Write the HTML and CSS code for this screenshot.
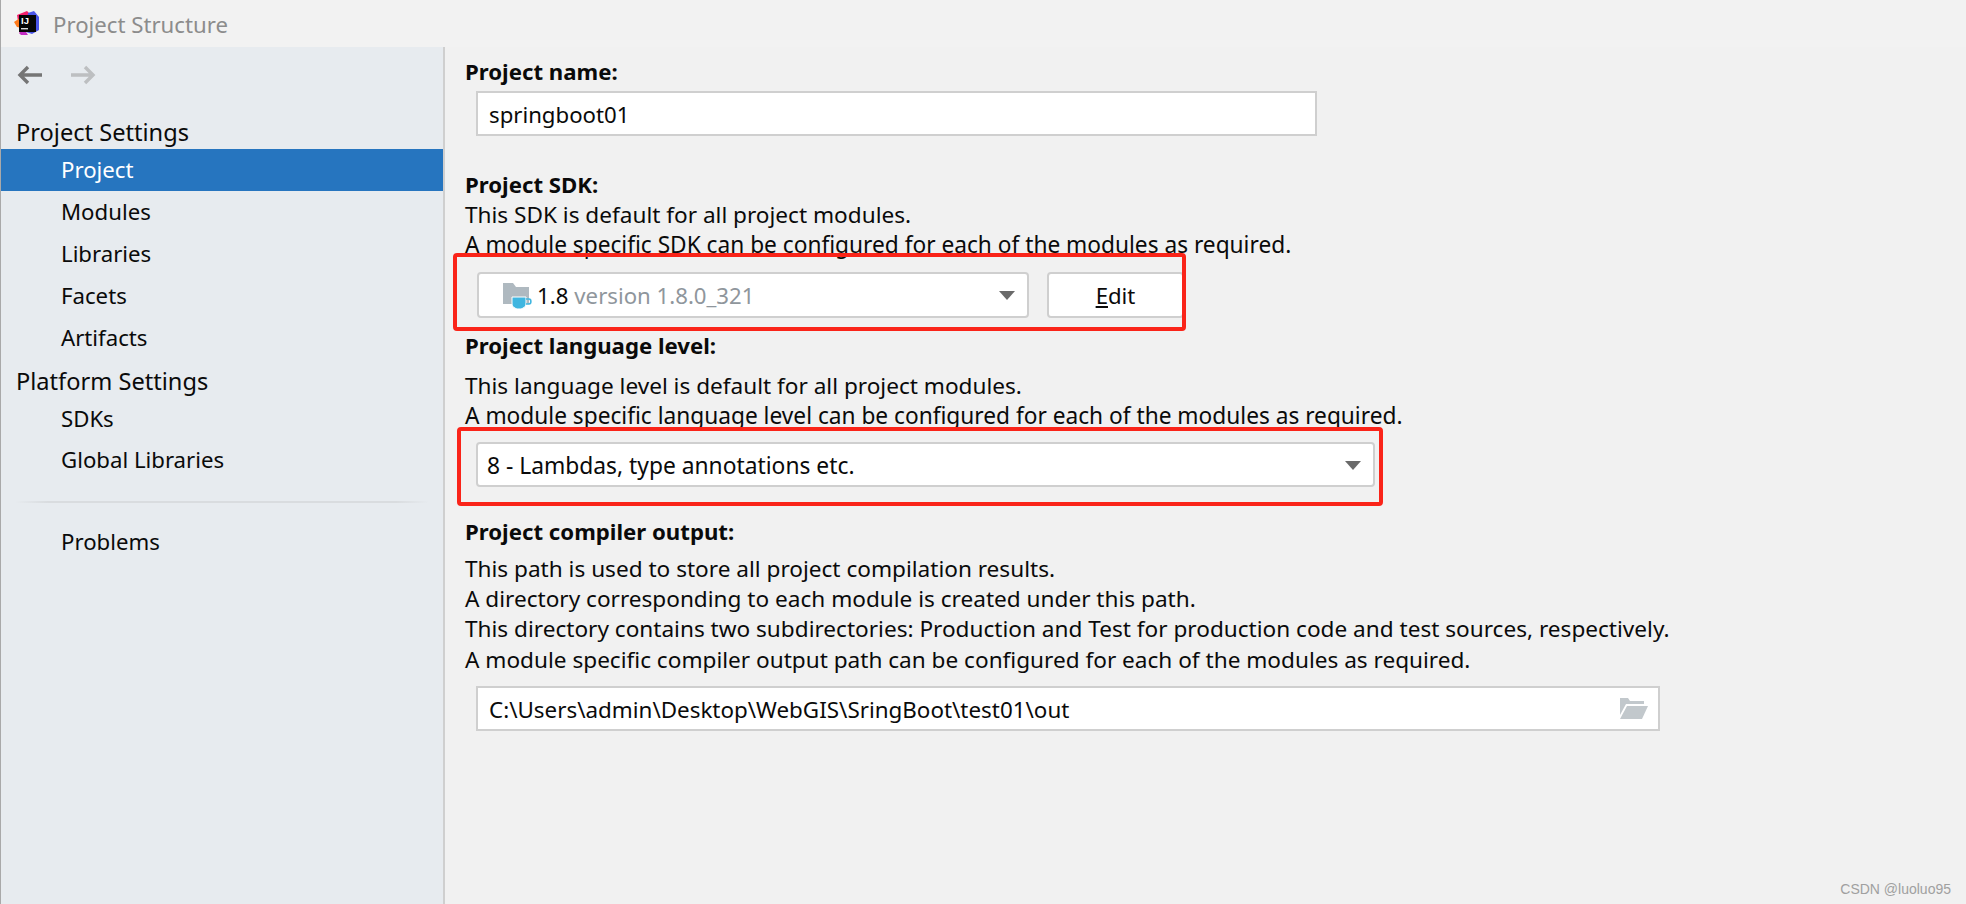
FILE: index.html
```html
<!DOCTYPE html>
<html lang="en">
<head>
<meta charset="utf-8">
<title>Project Structure</title>
<link rel="stylesheet" href="styles.css">
</head>
<body>
<header class="titlebar">
  <svg class="app-logo" width="26" height="26" viewBox="0 0 26 26">
    <path d="M3 5 L13 1 L17 5 L13 20 L6 24 Z" fill="#f5206b"/>
    <path d="M0 12 L6 8 L9 18 L3 17 Z" fill="#ff7a1a"/>
    <path d="M14 3 L20 1 L25 7 L25 20 L18 24 L12 22 Z" fill="#4a55e8"/>
    <path d="M5 23 L10 19 L14 25 L7 25 Z" fill="#c22cc2"/>
    <rect x="5" y="5" width="17" height="17" fill="#050505"/>
    <rect x="7" y="18" width="7" height="1.4" fill="#dddddd"/>
    <text class="app-logo-text" x="7" y="14">IJ</text>
  </svg>
  <span class="title-text">Project Structure</span>
</header>
<div class="main">
  <aside class="sidebar">
    <div class="nav-arrows">
      <svg width="26" height="20" viewBox="0 0 26 20"><path d="M25 10 H3 M11 2 L3 10 L11 18" fill="none" stroke="#757575" stroke-width="3.4"/></svg>
      <svg width="26" height="20" viewBox="0 0 26 20"><path d="M1 10 H23 M15 2 L23 10 L15 18" fill="none" stroke="#bdbfc1" stroke-width="3.4"/></svg>
    </div>
    <div class="group first">Project Settings</div>
    <div class="item selected">Project</div>
    <div class="item">Modules</div>
    <div class="item">Libraries</div>
    <div class="item">Facets</div>
    <div class="item">Artifacts</div>
    <div class="group">Platform Settings</div>
    <div class="item tight">SDKs</div>
    <div class="item">Global Libraries</div>
    <div class="divider"></div>
    <div class="item">Problems</div>
  </aside>
  <main class="content">
    <div class="label">Project name:</div>
    <div class="field name-field">springboot01</div>

    <div class="label sdk-label">Project SDK:</div>
    <div class="line">This SDK is default for all project modules.</div>
    <div class="line wide">A module specific SDK can be configured for each of the modules as required.</div>
    <div class="sdk-row">
      <div class="combo sdk-combo">
        <svg class="sdk-icon" width="30" height="30" viewBox="0 0 30 30">
          <path d="M1 3 H11 L14 7 H27 V24 H1 Z" fill="#afb9c0"/>
          <path d="M10 17 H24 V23 C24 27 21 29 17 29 C13 29 10 27 10 23 Z" fill="#40b6e0" stroke="#fff" stroke-width="1"/>
          <path d="M24 19 H27 C29.5 19 29.5 24 27 24 H24" fill="none" stroke="#40b6e0" stroke-width="1.6"/>
        </svg>
        <span class="combo-text">1.8</span><span class="combo-text muted">version 1.8.0_321</span>
        <span class="caret"></span>
      </div>
      <div class="button"><span class="mnemonic">E</span>dit</div>
    </div>

    <div class="label lang-label">Project language level:</div>
    <div class="line lang-first">This language level is default for all project modules.</div>
    <div class="line wide">A module specific language level can be configured for each of the modules as required.</div>
    <div class="combo lang-combo">
      <span class="combo-text lang-value">8 - Lambdas, type annotations etc.</span>
      <span class="caret"></span>
    </div>

    <div class="label out-label">Project compiler output:</div>
    <div class="line out-first">This path is used to store all project compilation results.</div>
    <div class="line">A directory corresponding to each module is created under this path.</div>
    <div class="line">This directory contains two subdirectories: Production and Test for production code and test sources, respectively.</div>
    <div class="line out-last">A module specific compiler output path can be configured for each of the modules as required.</div>
    <div class="field out-field">
      <span class="path-text">C:\Users\admin\Desktop\WebGIS\SringBoot\test01\out</span>
      <svg width="28" height="21" viewBox="0 0 28 21"><path d="M0 0 H8 L10 3 H24 V6 H6 L0 17 Z" fill="#c2c8cc"/><path d="M7 8 H28 L22 21 H0 Z" fill="#c2c8cc"/></svg>
    </div>
  </main>
</div>
<div class="mark mark-sdk"></div>
<div class="mark mark-lang"></div>
<div class="watermark">CSDN @luoluo95</div>
</body>
</html>
```

FILE: styles.css
```css
* { box-sizing: border-box; }
html, body { margin: 0; height: 100%; }
body {
  width: 1966px;
  height: 904px;
  overflow: hidden;
  position: relative;
  display: flex;
  flex-direction: column;
  background: #f1f1f1;
  color: #0a0a0a;
  font-family: "Noto Sans", "Open Sans", sans-serif;
  font-size: 22.2px;
  line-height: 30px;
  border-left: 1px solid #a9a9a9;
}
.titlebar {
  height: 47px;
  flex: none;
  display: flex;
  align-items: center;
  padding-left: 13px;
  background: #f2f2f2;
}
.app-logo { margin-top: -2px; flex: none; }
.app-logo-text { font-family: "Liberation Sans", sans-serif; font-size: 9.5px; font-weight: 700; fill: #fff; }
.title-text { margin-left: 13px; padding-top: 2px; color: #8c8c8c; font-size: 22.2px; }
.main { flex: 1; display: flex; min-height: 0; }
.sidebar {
  width: 444px;
  flex: none;
  background: #e7ebef;
  border-right: 2px solid #cfcfcf;
}
.nav-arrows {
  display: flex;
  gap: 27px;
  padding: 18px 0 0 16px;
  height: 64px;
}
.group { height: 42px; line-height: 44px; padding-left: 15px; font-size: 23.6px; }
.group.first { height: 38px; line-height: 42px; }
.item { height: 42px; line-height: 42px; padding-left: 60px; }
.item.tight { height: 38px; line-height: 36px; }
.item.selected { background: #2675bf; color: #fff; }
.divider {
  height: 2px;
  margin: 20px 14px 18px;
  background: linear-gradient(90deg, #e7ebef, #d9dcdf 8%, #d9dcdf 92%, #e7ebef);
}
.content { flex: 1; padding: 10px 0 0 20px; min-width: 0; }
.label { font-weight: 700; }
.line { height: 30px; line-height: 32px; white-space: nowrap; font-size: 22.6px; }
.line.wide { font-size: 22.7px; }
.field {
  margin-left: 11px;
  height: 45px;
  background: #fff;
  border: 2px solid #cfcfcf;
  line-height: 43px;
  padding-left: 11px;
}
.name-field { width: 841px; margin-top: 4px; }
.sdk-label { margin-top: 33px; line-height: 32px; height: 30px; }
.sdk-row { display: flex; gap: 18px; margin: 13px 0 0 12px; }
.combo {
  display: flex;
  align-items: center;
  background: #fff;
  border: 2px solid #cfcfcf;
  border-radius: 4px;
  position: relative;
}
.combo-text { padding-top: 2px; }
.sdk-combo { width: 552px; height: 46px; padding-left: 23px; }
.sdk-icon { margin-right: 5px; flex: none; }
.muted { color: #8f969c; margin-left: 6px; }
.caret {
  position: absolute;
  right: 12px;
  top: 17px;
  border-left: 8px solid transparent;
  border-right: 8px solid transparent;
  border-top: 9px solid #6a6a6a;
}
.button {
  width: 137px;
  height: 46px;
  background: #fff;
  border: 2px solid #cfcfcf;
  border-radius: 4px;
  text-align: center;
  line-height: 44px;
}
.mnemonic { text-decoration: underline; }
.lang-label { margin-top: 13px; }
.lang-first { margin-top: 9px; }
.lang-combo { margin: 12px 0 0 11px; width: 899px; height: 45px; padding-left: 9px; }
.lang-value { font-size: 22.8px; }
.out-label { margin-top: 30px; }
.out-first { margin-top: 6px; }
.out-last { margin-top: 1px; }
.out-field {
  width: 1184px;
  margin-top: 12px;
  display: flex;
  align-items: center;
  justify-content: space-between;
  padding-right: 10px;
}
.path-text { padding-top: 2px; font-size: 22.4px; }
.mark {
  position: absolute;
  border: 4px solid #fa2419;
  border-radius: 4px;
}
.mark-sdk { left: 452px; top: 253px; width: 733px; height: 78px; }
.mark-lang { left: 456px; top: 427px; width: 926px; height: 79px; }
.watermark {
  position: absolute;
  right: 15px;
  top: 880px;
  font-family: "Liberation Sans", sans-serif;
  font-size: 14px;
  line-height: 18px;
  color: #a0a0a0;
}
```
